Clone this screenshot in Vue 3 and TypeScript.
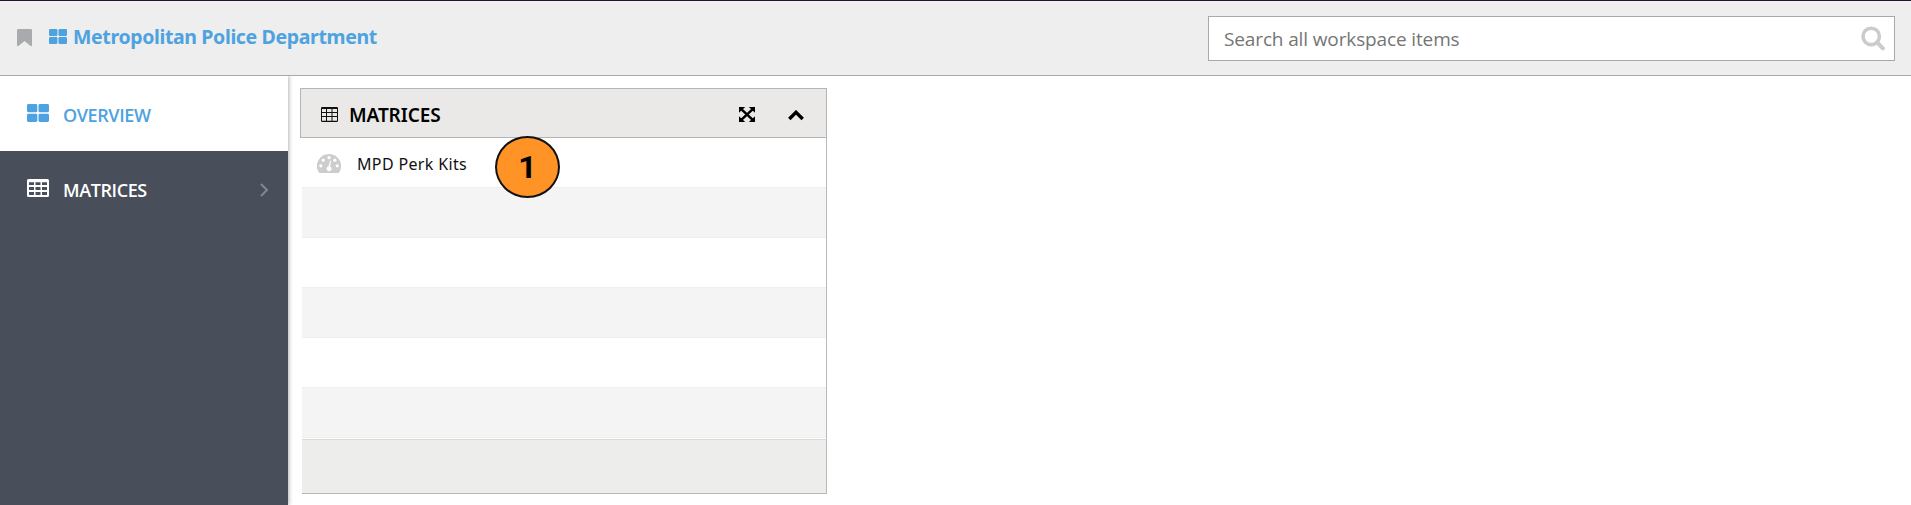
<script setup lang="ts">
interface Row {
  id: number
  name: string
}

const rows: Row[] = [
  { id: 1, name: 'MPD Perk Kits' },
  { id: 2, name: '' },
  { id: 3, name: '' },
  { id: 4, name: '' },
  { id: 5, name: '' },
  { id: 6, name: '' },
]
</script>

<template>
  <div class="page">
    <header class="topbar">
      <svg class="bookmark" width="15" height="18" viewBox="0 0 15 18">
        <path d="M1.2 0h12.6Q15 0 15 1.2V16q0 1.6-1.4 1L7.5 12 1.4 17Q0 17.6 0 16V1.2Q0 0 1.2 0z" fill="#a9aaad" />
      </svg>
      <svg class="title-icon" width="18" height="15" viewBox="0 0 18 15" fill="#4da2df">
        <rect width="8.4" height="7" rx="1.2" />
        <rect x="9.5" width="8.5" height="7" rx="1.2" />
        <rect y="8" width="8.4" height="7" rx="1.2" />
        <rect x="9.5" y="8" width="8.5" height="7" rx="1.2" />
      </svg>
      <h1 class="title"><span>Metropolitan Police Department</span></h1>
      <div class="search">
        <span class="placeholder">Search all workspace items</span>
        <svg class="glass" width="24" height="25" viewBox="0 0 24 25" fill="none" stroke="#cbcbcb">
          <circle cx="10.2" cy="10.4" r="8.2" stroke-width="3.6" />
          <path d="M16.3 16.6l5.6 5.8" stroke-width="4" stroke-linecap="round" />
        </svg>
      </div>
    </header>

    <div class="body">
      <nav class="sidebar">
        <div class="nav-item active">
          <svg class="nav-icon" width="22" height="18" viewBox="0 0 22 18" fill="#4da2df">
            <rect width="10.3" height="8.3" rx="1.4" />
            <rect x="11.5" width="10.5" height="8.3" rx="1.4" />
            <rect y="9.7" width="10.3" height="8.3" rx="1.4" />
            <rect x="11.5" y="9.7" width="10.5" height="8.3" rx="1.4" />
          </svg>
          <span class="nav-label overview">OVERVIEW</span>
        </div>
        <div class="nav-item">
          <svg class="nav-icon" width="22" height="18" viewBox="0 0 22 18">
            <path fill="#fff" fill-rule="evenodd" d="M1.500 0h19Q22 0 22 1.500v15Q22 18 20.500 18h-19Q0 18 0 16.500v-15Q0 0 1.500 0zM2 3.300v2.600h5V3.300zM8.500 3.300v2.600h5V3.300zM15 3.300v2.600h5V3.300zM2 8v3h5V8zM8.500 8v3h5V8zM15 8v3h5V8zM2 13v3h5v-3zM8.500 13v3h5v-3zM15 13v3h5v-3z" />
          </svg>
          <span class="nav-label matrices">MATRICES</span>
          <svg class="nav-arrow" width="9" height="14" viewBox="0 0 9 14">
            <path d="M1 1l6 6-6 6" fill="none" stroke="#7d8a99" stroke-width="1.9" />
          </svg>
        </div>
      </nav>

      <main class="content">
        <section class="panel">
          <div class="panel-head">
            <svg class="head-icon" width="17" height="15" viewBox="0 0 17 15">
              <path fill="#111" fill-rule="evenodd" d="M1.200 0h14.600Q17 0 17 1.200v12.600Q17 15 15.800 15H1.200Q0 15 0 13.800V1.200Q0 0 1.200 0zM1 2v3h4V2zM6 2v3h4.500V2zM11.500 2v3H16V2zM1 6v3h4V6zM6 6v3h4.500V6zM11.500 6v3H16V6zM1 10v3.800h4V10zM6 10v3.800h4.500V10zM11.500 10v3.800H16V10z" />
            </svg>
            <h2 class="head-label"><span>MATRICES</span></h2>
            <svg class="expand" width="16" height="15" viewBox="0 0 16 16" preserveAspectRatio="none">
              <path d="M2 2l12 12M14 2L2 14" stroke="#000" stroke-width="2.400" />
              <path d="M0 0h6.200L0 6.200zM16 0v6.200L9.800 0zM0 16V9.800L6.200 16zM16 16H9.800L16 9.800z" />
            </svg>
            <svg class="collapse" width="16" height="11" viewBox="0 0 16 11">
              <path d="M1.300 9L8 2.300 14.700 9" fill="none" stroke="#000" stroke-width="3.400" />
            </svg>
          </div>
          <div class="rows">
            <div v-for="row in rows" :key="row.id" class="row">
              <template v-if="row.name">
                <svg class="gauge" width="24" height="19" viewBox="0 0 24 19">
                  <path d="M12 0a12 12 0 0 1 10.300 18.200q-.5.8-1.300.8H3q-.8 0-1.300-.8A12 12 0 0 1 12 0z" fill="#cdcdcd" />
                  <g fill="#fff">
                    <circle cx="3.800" cy="11.800" r="1.600" />
                    <circle cx="6.200" cy="6.200" r="1.600" />
                    <circle cx="12" cy="3.700" r="1.600" />
                    <circle cx="17.800" cy="6.200" r="1.600" />
                    <circle cx="20.200" cy="11.800" r="1.600" />
                    <path d="M13 6.800l1.100.3-1 5.300a2.500 2.500 0 1 1-1.500-.2z" />
                  </g>
                </svg>
                <span class="row-name">{{ row.name }}</span>
              </template>
            </div>
          </div>
          <div class="panel-foot"></div>
          <div class="callout"><span>1</span></div>
        </section>
      </main>
    </div>
  </div>
</template>

<style>
body {
  background: #fff;
  overflow: hidden;
}
</style>

<style scoped>
.page {
  height: 505px;
  display: flex;
  flex-direction: column;
  font-family: "Noto Sans", "Open Sans", sans-serif;
}
svg {
  display: block;
  flex: none;
}
.topbar {
  position: relative;
  z-index: 1;
  box-sizing: border-box;
  height: 76px;
  flex: none;
  display: flex;
  align-items: flex-start;
  border-top: 1px solid #1c1829;
  border-bottom: 1px solid #a9a9a9;
  background: linear-gradient(#f3edf2, #eee 5px);
}
.bookmark {
  margin: 28px 0 0 17px;
}
.title-icon {
  margin: 28px 0 0 17px;
}
.title {
  margin: 22px 0 0 6px;
  font-size: 19.5px;
  letter-spacing: -0.36px;
  line-height: 28px;
  font-weight: 700;
  color: #4da2df;
  white-space: nowrap;
}
.search {
  box-sizing: border-box;
  width: 687px;
  height: 45px;
  margin: 15px 16px 0 auto;
  padding: 0 9px 0 15px;
  border: 1px solid #a9a9a9;
  background: #fff;
  display: flex;
  align-items: center;
  justify-content: space-between;
}
.placeholder {
  font-family: "Open Sans", sans-serif;
  font-size: 19px;
  letter-spacing: -0.13px;
  line-height: 26px;
  color: #757575;
}
.body {
  flex: 1;
  min-height: 0;
  display: flex;
}
.sidebar {
  width: 288px;
  flex: none;
  background: #484f5b;
  box-shadow: 1px 0 4px rgba(0, 0, 0, 0.3);
}
.nav-item {
  box-sizing: border-box;
  height: 75px;
  padding: 28px 19px 0 27px;
  display: flex;
  align-items: flex-start;
  color: #fff;
}
.nav-item.active {
  background: #fff;
  color: #4da2df;
}
.nav-label {
  margin: -2px 0 0 14px;
  font-family: "Open Sans", sans-serif;
  font-size: 18px;
  font-weight: 600;
  letter-spacing: -0.4px;
  line-height: 26px;
}
.nav-arrow {
  margin: 4px 0 0 auto;
}
.content {
  flex: 1;
  padding: 12px 0 0 12px;
}
.panel {
  position: relative;
  width: 527px;
}
.panel-head {
  box-sizing: border-box;
  height: 50px;
  padding: 3px 22px 0 20px;
  display: flex;
  align-items: center;
  border: 1px solid #b5b5b5;
  background: #eae9e7;
}
.head-label {
  margin: 0 auto 0 11px;
  font-size: 19px;
  letter-spacing: -0.1px;
  line-height: 28px;
  font-weight: 600;
  color: #000;
}
.collapse {
  margin: 2px 0 0 33px;
}
.rows {
  margin-left: 2px;
  padding-bottom: 1px;
  border-right: 1px solid #b9b9b9;
}
.row {
  box-sizing: border-box;
  height: 49px;
  padding: 1px 0 0 15px;
  display: flex;
  align-items: center;
}
.row:nth-child(even) {
  height: 51px;
  background: #f4f4f4;
  border-top: 1px solid #efefef;
  border-bottom: 1px solid #efefef;
}
.row-name {
  margin: 1px 0 0 16px;
  font-size: 16px;
  letter-spacing: 0.35px;
  line-height: 24px;
  color: #111;
}
.panel-foot {
  box-sizing: border-box;
  height: 55px;
  margin-left: 2px;
  border: solid #b9b9b9;
  border-width: 1px 1px 1px 0;
  border-top-color: #d9d9d9;
  background: #ededeb;
}
.callout {
  position: absolute;
  left: 195px;
  top: 48px;
  box-sizing: border-box;
  width: 65px;
  height: 62px;
  display: flex;
  align-items: center;
  justify-content: center;
  border: 2px solid #111;
  border-radius: 50%;
  background: #ff9326;
  font: 700 32px/36px Roboto, sans-serif;
  color: #000;
}
</style>
